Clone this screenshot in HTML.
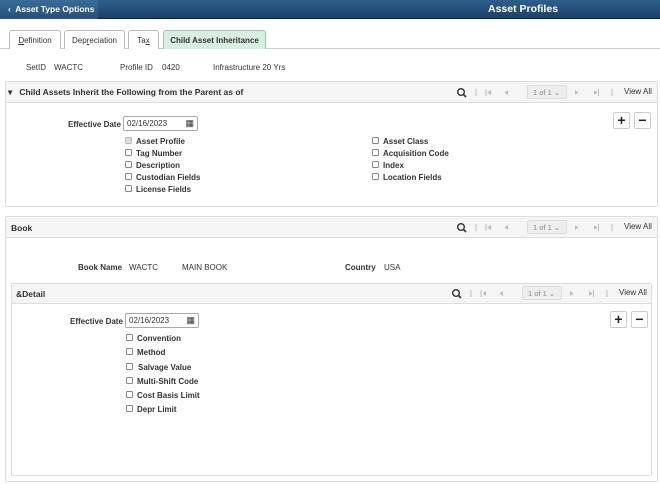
<!DOCTYPE html>
<html><head><meta charset="utf-8"><style>
*{box-sizing:border-box;margin:0;padding:0}
body{width:660px;height:484px;background:#fff;font-family:"Liberation Sans",Arial,sans-serif;font-size:8px;color:#333;position:relative;overflow:hidden}
.a{position:absolute;white-space:nowrap}
.hdr{left:0;top:0;width:660px;height:19px;background:linear-gradient(#2f5f8c,#1d4168);border-bottom:1px solid #123}
.back{left:0;top:0;width:98px;height:19px;background:linear-gradient(#3a6c97,#24507a);color:#fff;font-weight:bold;font-size:8.5px;padding:4px 0 0 8px}
.tab{top:30px;height:19px;border:1px solid #bbb;border-bottom:none;border-radius:3px 3px 0 0;background:#fff;text-align:center;padding-top:5px;font-size:8px;color:#333}
.line{left:0;top:48px;width:660px;height:1px;background:#ccc}
.box{border:1px solid #ddd;border-radius:2px}
.sh{background:#f5f5f5;border-bottom:1px solid #ddd}
.b{font-weight:bold}
.cb{width:7px;height:7px;border:1px solid #888;border-radius:1.5px;background:#fff}
.inp{height:15px;border:1px solid #aaa;border-radius:2px;background:#fff;padding:2px 0 0 3px;font-size:8px}
.btn{width:17px;height:17px;border:1px solid #ccc;border-radius:2px;background:#fff;text-align:center;font-weight:bold;font-size:14px;line-height:14px;color:#222}
.pg{height:14px;border:1px solid #ddd;border-radius:2px;background:#eee;color:#888;font-size:7.5px;padding:2px 0 0 5px;width:40px}
</style></head><body>
<div class="a hdr"></div>
<div class="a back">&lsaquo;&nbsp; Asset Type Options</div>
<div class="a" style="left:488px;top:3px;color:#fff;font-weight:bold;font-size:10.5px">Asset Profiles</div>
<div class="a line"></div>
<div class="a tab" style="left:9px;width:52px"><u>D</u>efinition</div>
<div class="a tab" style="left:64px;width:61px">Dep<u>r</u>eciation</div>
<div class="a tab" style="left:128px;width:31px">Ta<u>x</u></div>
<div class="a tab b" style="left:163px;width:103px;background:#d6efe0;border-color:#9cc9ac">Child Asset Inheritance</div>
<div class="a" style="left:26px;top:63px">SetID</div>
<div class="a" style="left:54px;top:63px">WACTC</div>
<div class="a" style="left:120px;top:63px">Profile ID</div>
<div class="a" style="left:162px;top:63px">0420</div>
<div class="a" style="left:213px;top:63px">Infrastructure 20 Yrs</div>

<svg width="0" height="0" style="position:absolute"><defs>
<g id="nav">
<circle cx="5" cy="5" r="3.3" fill="none" stroke="#333" stroke-width="1.4"/><line x1="7.5" y1="7.5" x2="10" y2="10" stroke="#333" stroke-width="1.6"/>
<line x1="20" y1="2" x2="20" y2="9" stroke="#bbb"/>
<line x1="30" y1="2" x2="30" y2="9" stroke="#bbb"/><path d="M35 3 L31.5 5.5 L35 8Z" fill="#bbb"/>
<path d="M52 3 L48.5 5.5 L52 8Z" fill="#bbb"/>
<path d="M119 3 L122.5 5.5 L119 8Z" fill="#bbb"/>
<path d="M138 3 L141.5 5.5 L138 8Z" fill="#bbb"/><line x1="142.5" y1="2" x2="142.5" y2="9" stroke="#bbb"/>
<line x1="156" y1="2" x2="156" y2="9" stroke="#bbb"/>
</g></defs></svg>

<!-- section 1 -->
<div class="a box" style="left:5px;top:81px;width:653px;height:126px"></div>
<div class="a sh" style="left:6px;top:82px;width:651px;height:21px"></div>
<div class="a b" style="left:8px;top:87px;font-size:8.5px">&#9662;&nbsp;&nbsp; Child Assets Inherit the Following from the Parent as of</div>
<svg class="a" style="left:456px;top:87px" width="160" height="12"><use href="#nav"/></svg>
<div class="a pg" style="left:527px;top:85px">1 of 1 &#8964;</div>
<div class="a" style="left:624px;top:87px">View All</div>
<div class="a btn" style="left:613px;top:112px">+</div>
<div class="a btn" style="left:634px;top:112px">&minus;</div>
<div class="a b" style="left:68px;top:120px">Effective Date</div>
<div class="a inp" style="left:123px;top:116px;width:75px">02/16/2023<span style="position:absolute;right:3px;top:1px;font-size:9px">&#9638;</span></div>
<div class="a cb" style="left:125px;top:137px;background:#ddd;border-color:#bbb"></div><div class="a b" style="left:136px;top:137px">Asset Profile</div>
<div class="a cb" style="left:125px;top:149px"></div><div class="a b" style="left:136px;top:149px">Tag Number</div>
<div class="a cb" style="left:125px;top:161px"></div><div class="a b" style="left:136px;top:161px">Description</div>
<div class="a cb" style="left:125px;top:173px"></div><div class="a b" style="left:136px;top:173px">Custodian Fields</div>
<div class="a cb" style="left:125px;top:185px"></div><div class="a b" style="left:136px;top:185px">License Fields</div>
<div class="a cb" style="left:372px;top:137px"></div><div class="a b" style="left:383px;top:137px">Asset Class</div>
<div class="a cb" style="left:372px;top:149px"></div><div class="a b" style="left:383px;top:149px">Acquisition Code</div>
<div class="a cb" style="left:372px;top:161px"></div><div class="a b" style="left:383px;top:161px">Index</div>
<div class="a cb" style="left:372px;top:173px"></div><div class="a b" style="left:383px;top:173px">Location Fields</div>

<!-- Book -->
<div class="a box" style="left:5px;top:216px;width:653px;height:266px"></div>
<div class="a sh" style="left:6px;top:217px;width:651px;height:21px"></div>
<div class="a b" style="left:11px;top:223px;font-size:8.5px">Book</div>
<svg class="a" style="left:456px;top:222px" width="160" height="12"><use href="#nav"/></svg>
<div class="a pg" style="left:527px;top:220px">1 of 1 &#8964;</div>
<div class="a" style="left:624px;top:222px">View All</div>
<div class="a b" style="left:78px;top:263px">Book Name</div>
<div class="a" style="left:129px;top:263px">WACTC</div>
<div class="a" style="left:182px;top:263px">MAIN BOOK</div>
<div class="a b" style="left:345px;top:263px">Country</div>
<div class="a" style="left:384px;top:263px">USA</div>

<div class="a box" style="left:11px;top:283px;width:641px;height:193px"></div>
<div class="a sh" style="left:12px;top:284px;width:639px;height:20px"></div>
<div class="a b" style="left:16px;top:289px;font-size:8.5px">&amp;Detail</div>
<svg class="a" style="left:451px;top:288px" width="160" height="12"><use href="#nav"/></svg>
<div class="a pg" style="left:522px;top:286px">1 of 1 &#8964;</div>
<div class="a" style="left:619px;top:288px">View All</div>
<div class="a btn" style="left:610px;top:311px">+</div>
<div class="a btn" style="left:631px;top:311px">&minus;</div>
<div class="a b" style="left:70px;top:317px">Effective Date</div>
<div class="a inp" style="left:125px;top:313px;width:74px">02/16/2023<span style="position:absolute;right:3px;top:1px;font-size:9px">&#9638;</span></div>
<div class="a cb" style="left:126px;top:334px"></div><div class="a b" style="left:137px;top:334px">Convention</div>
<div class="a cb" style="left:126px;top:348px"></div><div class="a b" style="left:137px;top:348px">Method</div>
<div class="a cb" style="left:126px;top:363px"></div><div class="a b" style="left:138px;top:363px">Salvage Value</div>
<div class="a cb" style="left:126px;top:377px"></div><div class="a b" style="left:137px;top:377px">Multi-Shift Code</div>
<div class="a cb" style="left:126px;top:391px"></div><div class="a b" style="left:137px;top:391px">Cost Basis Limit</div>
<div class="a cb" style="left:126px;top:405px"></div><div class="a b" style="left:137px;top:405px">Depr Limit</div>
</body></html>
